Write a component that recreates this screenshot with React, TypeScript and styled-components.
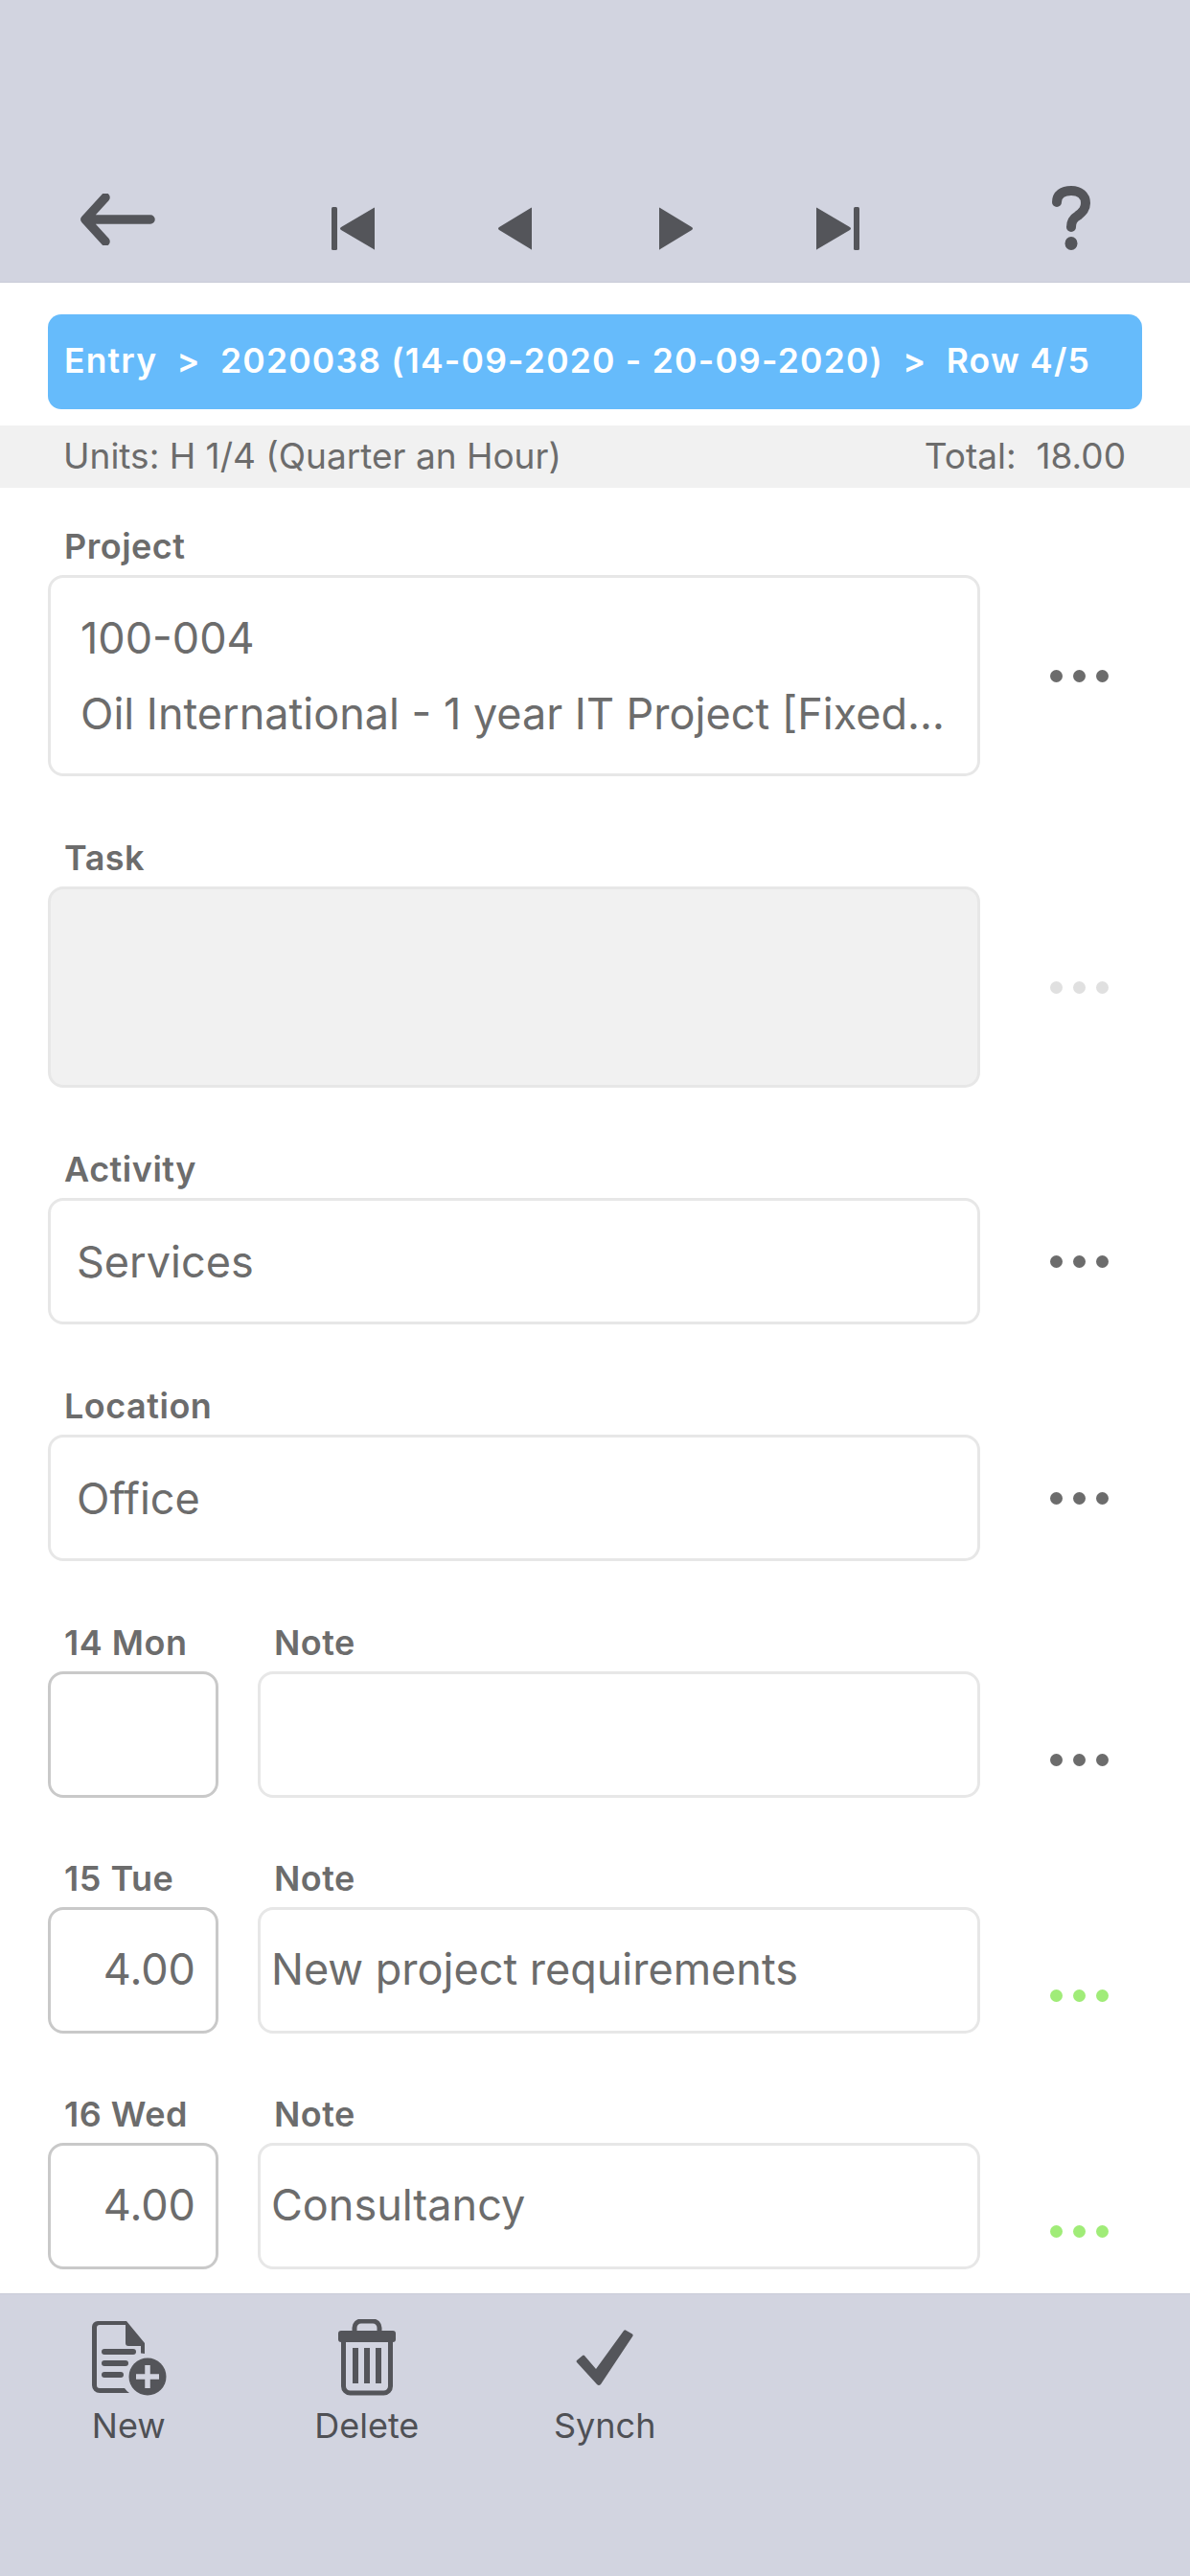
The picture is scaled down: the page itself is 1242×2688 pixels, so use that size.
import React from "react";
import styled, { createGlobalStyle } from "styled-components";

const GlobalStyle = createGlobalStyle`
  html, body {
    margin: 0;
    padding: 0;
    background: #fff;
  }
  * {
    box-sizing: border-box;
  }
`;

const Page = styled.div`
  width: 1242px;
  height: 2688px;
  display: flex;
  flex-direction: column;
  overflow: hidden;
  background: #fff;
  font-family: Inter, "Liberation Sans", sans-serif;
  color: #6c6c6c;
`;

const NavBar = styled.div`
  height: 295px;
  flex: none;
  display: flex;
  align-items: flex-end;
  padding: 0 0 33px 0;
  background: #d2d4e0;
  border-bottom: 1px solid #c9cbd8;
`;

const NavIcon = styled.svg<{ $left: number; $lift?: number }>`
  flex: none;
  margin-left: ${(p) => p.$left}px;
  margin-bottom: ${(p) => p.$lift ?? 0}px;
  fill: #54555a;
`;

const Breadcrumb = styled.div`
  flex: none;
  height: 99px;
  margin: 33px 50px 17px;
  padding: 0 0 3px 17px;
  display: flex;
  align-items: center;
  border-radius: 14px;
  background: #66bbfb;
  color: #fff;
  font-size: 35.5px;
  font-weight: 600;
  letter-spacing: 1.2px;
  white-space: pre;
`;

const UnitsStrip = styled.div`
  flex: none;
  height: 65px;
  padding: 0 67px 3px 66px;
  display: flex;
  align-items: center;
  justify-content: space-between;
  background: #f1f1f1;
  font-size: 37px;
  white-space: pre;
`;

const Form = styled.div`
  flex: 1;
  min-height: 0;
  padding: 49px 0 0 50px;
`;

const Row = styled.div<{ $tight?: boolean }>`
  display: flex;
  margin-bottom: ${(p) => (p.$tight ? 72 : 73)}px;
`;

const Column = styled.div<{ $width: number; $gap?: number }>`
  flex: none;
  width: ${(p) => p.$width}px;
  margin-right: ${(p) => p.$gap ?? 0}px;
`;

const Label = styled.div`
  height: 42px;
  padding: 0 0 0 17px;
  font-size: 36px;
  font-weight: 600;
  letter-spacing: 0.5px;
  line-height: 24px;
  white-space: pre;
`;

const Box = styled.div<{ $tall?: boolean; $disabled?: boolean }>`
  height: ${(p) => (p.$tall ? 210 : 132)}px;
  display: flex;
  flex-direction: column;
  justify-content: center;
  border: 3px solid #e7e7e7;
  border-radius: 16px;
  background: ${(p) => (p.$disabled ? "#f1f1f1" : "#fff")};
  font-size: 45px;
  white-space: nowrap;
  overflow: hidden;
`;

const TwoLineText = styled.div`
  padding: 0 0 0 31px;
  line-height: 79px;
`;

const SingleText = styled.div`
  padding: 0 0 0 27px;
`;

const AmountBox = styled(Box)`
  border-color: #c9c9c9;
  align-items: flex-end;
  padding: 0 21px 3px 0;
`;

const NoteBox = styled(Box)`
  padding: 0 0 3px 11px;
`;

const Dots = styled.div<{ $color: string; $low?: boolean }>`
  flex: none;
  width: 61px;
  margin-left: 73px;
  display: flex;
  justify-content: space-between;
  ${(p) => (p.$low ? "align-self: flex-end; margin-bottom: 33px;" : "")}
  & > span {
    width: 13px;
    height: 13px;
    border-radius: 50%;
    background: ${(p) => p.$color};
  }
`;

const Centered = styled.div<{ $tall?: boolean }>`
  flex: none;
  align-self: flex-end;
  height: ${(p) => (p.$tall ? 210 : 132)}px;
  display: flex;
  align-items: center;
`;

const BottomBar = styled.div`
  flex: none;
  height: 295px;
  padding: 26px 0 0 10px;
  display: flex;
  align-items: flex-start;
  background: #d2d4e0;
  border-top: 1px solid #c9cbd8;
`;

const ToolButton = styled.div`
  width: 248.5px;
  display: flex;
  flex-direction: column;
  align-items: center;
  color: #4f5055;
  font-size: 36px;
  line-height: 42px;
`;

const ToolIcon = styled.svg`
  display: block;
  height: 80px;
  margin-bottom: 10px;
  fill: #54555a;
`;

const ThreeDots: React.FC<{ color: string; low?: boolean }> = ({ color, low }) => (
  <Dots $color={color} $low={low}>
    <span />
    <span />
    <span />
  </Dots>
);

type DayRow = { day: string; amount: string; note: string; color: string };

const dayRows: DayRow[] = [
  { day: "14 Mon", amount: "", note: "", color: "#6c6c6c" },
  { day: "15 Tue", amount: "4.00", note: "New project requirements", color: "#a0ec78" },
  { day: "16 Wed", amount: "4.00", note: "Consultancy", color: "#a0ec78" },
];

const App: React.FC = () => {
  return (
    <Page>
      <GlobalStyle />
      <NavBar>
        <NavIcon $left={84} $lift={5} width="78" height="54" viewBox="0 0 78 54">
          <path d="M26 4 5 27l21 23M5 27h68" fill="none" stroke="#54555a" strokeWidth="9.500" strokeLinecap="round" strokeLinejoin="round" />
        </NavIcon>
        <NavIcon $left={184} width="45" height="45" viewBox="0 0 45 45">
          <rect x="0" y="0" width="6" height="45" rx="1.500" />
          <path d="M45 1v43q0 1-1 0L10 24q-2-1.500 0-3L44 1q1-1 1 0z" />
        </NavIcon>
        <NavIcon $left={129} width="35" height="45" viewBox="0 0 35 45">
          <path d="M35 1v43q0 1-1 0L1 24q-2-1.500 0-3L34 1q1-1 1 0z" />
        </NavIcon>
        <NavIcon $left={133} width="35" height="45" viewBox="0 0 35 45">
          <path d="M0 1v43q0 1 1 0l33-20q2-1.500 0-3L1 1Q0 0 0 1z" />
        </NavIcon>
        <NavIcon $left={129} width="45" height="45" viewBox="0 0 45 45">
          <rect x="39" y="0" width="6" height="45" rx="1.500" />
          <path d="M0 1v43q0 1 1 0l34-20q2-1.500 0-3L1 1Q0 0 0 1z" />
        </NavIcon>
        <NavIcon $left={201} width="40" height="67" viewBox="0 0 40 67">
          <path d="M5 17C5 9 11 5 20 5s15 5 15 13c0 6-3 9-8 13-5 3-7 6-7 12" fill="none" stroke="#54555a" strokeWidth="10" strokeLinecap="round" />
          <ellipse cx="20" cy="60" rx="6.500" ry="7" />
        </NavIcon>
      </NavBar>
      <Breadcrumb>Entry  &gt;  2020038 (14-09-2020 - 20-09-2020)  &gt;  Row 4/5</Breadcrumb>
      <UnitsStrip>
        <span>Units: H 1/4 (Quarter an Hour)</span>
        <span>Total:  18.00</span>
      </UnitsStrip>
      <Form>
        <Row>
          <Column $width={973}>
            <Label>Project</Label>
            <Box $tall>
              <TwoLineText>100-004</TwoLineText>
              <TwoLineText>Oil International - 1 year IT Project [Fixed…</TwoLineText>
            </Box>
          </Column>
          <Centered $tall>
            <ThreeDots color="#6c6c6c" />
          </Centered>
        </Row>
        <Row>
          <Column $width={973}>
            <Label>Task</Label>
            <Box $tall $disabled />
          </Column>
          <Centered $tall>
            <ThreeDots color="#e0e0e0" />
          </Centered>
        </Row>
        <Row>
          <Column $width={973}>
            <Label>Activity</Label>
            <Box>
              <SingleText>Services</SingleText>
            </Box>
          </Column>
          <Centered>
            <ThreeDots color="#6c6c6c" />
          </Centered>
        </Row>
        <Row>
          <Column $width={973}>
            <Label>Location</Label>
            <Box>
              <SingleText>Office</SingleText>
            </Box>
          </Column>
          <Centered>
            <ThreeDots color="#6c6c6c" />
          </Centered>
        </Row>
        {dayRows.map((row) => (
          <Row key={row.day} $tight>
            <Column $width={178} $gap={41}>
              <Label>{row.day}</Label>
              <AmountBox>{row.amount}</AmountBox>
            </Column>
            <Column $width={754}>
              <Label>Note</Label>
              <NoteBox>{row.note}</NoteBox>
            </Column>
            <ThreeDots color={row.color} low />
          </Row>
        ))}
      </Form>
      <BottomBar>
        <ToolButton>
          <ToolIcon viewBox="0 0 80 80" width="80">
            <path d="M8 3h30l19 23v11a20 20 0 0 0-4-.500V29H40a3 3 0 0 1-3-3V7H10a3 3 0 0 0-3 3v60a3 3 0 0 0 3 3h26a20 20 0 0 0 5 5H10a8 8 0 0 1-8-8V9a6 6 0 0 1 6-6z" transform="translate(0 -1)" />
            <rect x="12" y="31" width="36" height="6" rx="3" />
            <rect x="12" y="43" width="28" height="6" rx="3" />
            <rect x="12" y="55" width="23" height="6" rx="3" />
            <circle cx="60" cy="60" r="19.500" />
            <path d="M60 48v24M48 60h24" stroke="#d2d4e0" strokeWidth="5.500" />
          </ToolIcon>
          New
        </ToolButton>
        <ToolButton>
          <ToolIcon viewBox="0 0 62 80" width="62">
            <path d="M18 13V9a7 7 0 0 1 7-7h12a7 7 0 0 1 7 7v4" fill="none" stroke="#54555a" strokeWidth="5" />
            <rect x="1" y="12" width="60" height="12" rx="3" />
            <path d="M6.500 22v48a7 7 0 0 0 7 7h35a7 7 0 0 0 7-7V22" fill="none" stroke="#54555a" strokeWidth="5" />
            <rect x="16" y="30" width="6" height="37" />
            <rect x="28" y="30" width="6" height="37" />
            <rect x="40" y="30" width="6" height="37" />
          </ToolIcon>
          Delete
        </ToolButton>
        <ToolButton>
          <ToolIcon viewBox="0 0 62 80" width="62">
            <path d="M2 45q-1-1 0-2l6-5q1-1 2 0l12 14L51 12q1-1 2-.500l7 4q1 1 .500 2L27 68q-2 2-4 0z" />
          </ToolIcon>
          Synch
        </ToolButton>
      </BottomBar>
    </Page>
  );
};

export default App;
